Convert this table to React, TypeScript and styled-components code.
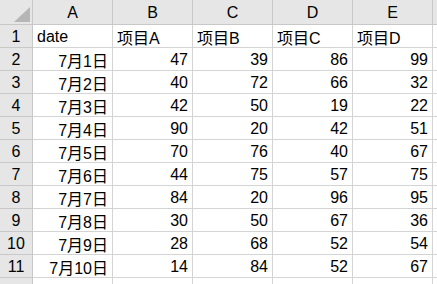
import React from 'react';
import styled, { createGlobalStyle } from 'styled-components';

type Row = [string, number, number, number, number];

const columns = ['A', 'B', 'C', 'D', 'E'];

const rows: Row[] = [
  ['7月1日', 47, 39, 86, 99],
  ['7月2日', 40, 72, 66, 32],
  ['7月3日', 42, 50, 19, 22],
  ['7月4日', 90, 20, 42, 51],
  ['7月5日', 70, 76, 40, 67],
  ['7月6日', 44, 75, 57, 75],
  ['7月7日', 84, 20, 96, 95],
  ['7月8日', 30, 50, 67, 36],
  ['7月9日', 28, 68, 52, 54],
  ['7月10日', 14, 84, 52, 67],
];

const headings = ['date', '项目A', '项目B', '项目C', '项目D'];

const GlobalStyle = createGlobalStyle`
  html, body {
    margin: 0;
    padding: 0;
    background: #ffffff;
  }
`;

const Sheet = styled.div`
  width: 437px;
  height: 284px;
  overflow: hidden;
  display: grid;
  grid-template-columns: 33px repeat(5, 80px) 1fr;
  grid-template-rows: 25px repeat(12, 23px);
  font-family: 'Liberation Sans', 'Noto Sans CJK SC', sans-serif;
  font-size: 16px;
  color: #000;
`;

const Corner = styled.div`
  box-sizing: border-box;
  background: #e6e6e6;
  border-right: 1px solid #c8c8c8;
  border-bottom: 1px solid #c8c8c8;
  display: flex;
  align-items: flex-end;
  justify-content: flex-end;
  padding: 0 2px 2px 0;
`;

const ColHead = styled.div`
  box-sizing: border-box;
  background: #e6e6e6;
  border-right: 1px solid #c8c8c8;
  border-bottom: 1px solid #c8c8c8;
  display: flex;
  align-items: center;
  justify-content: center;
  padding-top: 2px;
`;

const RowHead = styled.div`
  box-sizing: border-box;
  background: #e6e6e6;
  border-right: 1px solid #c8c8c8;
  border-bottom: 1px solid #c8c8c8;
  display: flex;
  align-items: center;
  justify-content: center;
  padding-top: 1px;
`;

const Cell = styled.div<{ $right?: boolean }>`
  box-sizing: border-box;
  border-right: 1px solid #d4d4d4;
  border-bottom: 1px solid #d4d4d4;
  display: flex;
  align-items: center;
  justify-content: ${(p) => (p.$right ? 'flex-end' : 'flex-start')};
  padding: 2px 4px 0 4px;
  white-space: nowrap;
`;

const CornerMark = () => (
  <svg width="16" height="15" viewBox="0 0 16 15">
    <polygon points="16,0 16,15 0,15" fill="#b6b6b6" />
  </svg>
);

const App: React.FC = () => {
  return (
    <>
      <GlobalStyle />
      <Sheet>
        <Corner>
          <CornerMark />
        </Corner>
        {columns.map((c) => (
          <ColHead key={c}>{c}</ColHead>
        ))}
        <ColHead />

        <RowHead>1</RowHead>
        {headings.map((h) => (
          <Cell key={h}>{h}</Cell>
        ))}
        <Cell />

        {rows.map((r, i) => (
          <React.Fragment key={r[0]}>
            <RowHead>{i + 2}</RowHead>
            {r.map((v, j) => (
              <Cell key={j} $right>
                {v}
              </Cell>
            ))}
            <Cell />
          </React.Fragment>
        ))}

        {/* row 12 only peeks in at the bottom edge */}
        <RowHead />
        {columns.map((c) => (
          <Cell key={c} />
        ))}
        <Cell />
      </Sheet>
    </>
  );
};

export default App;
